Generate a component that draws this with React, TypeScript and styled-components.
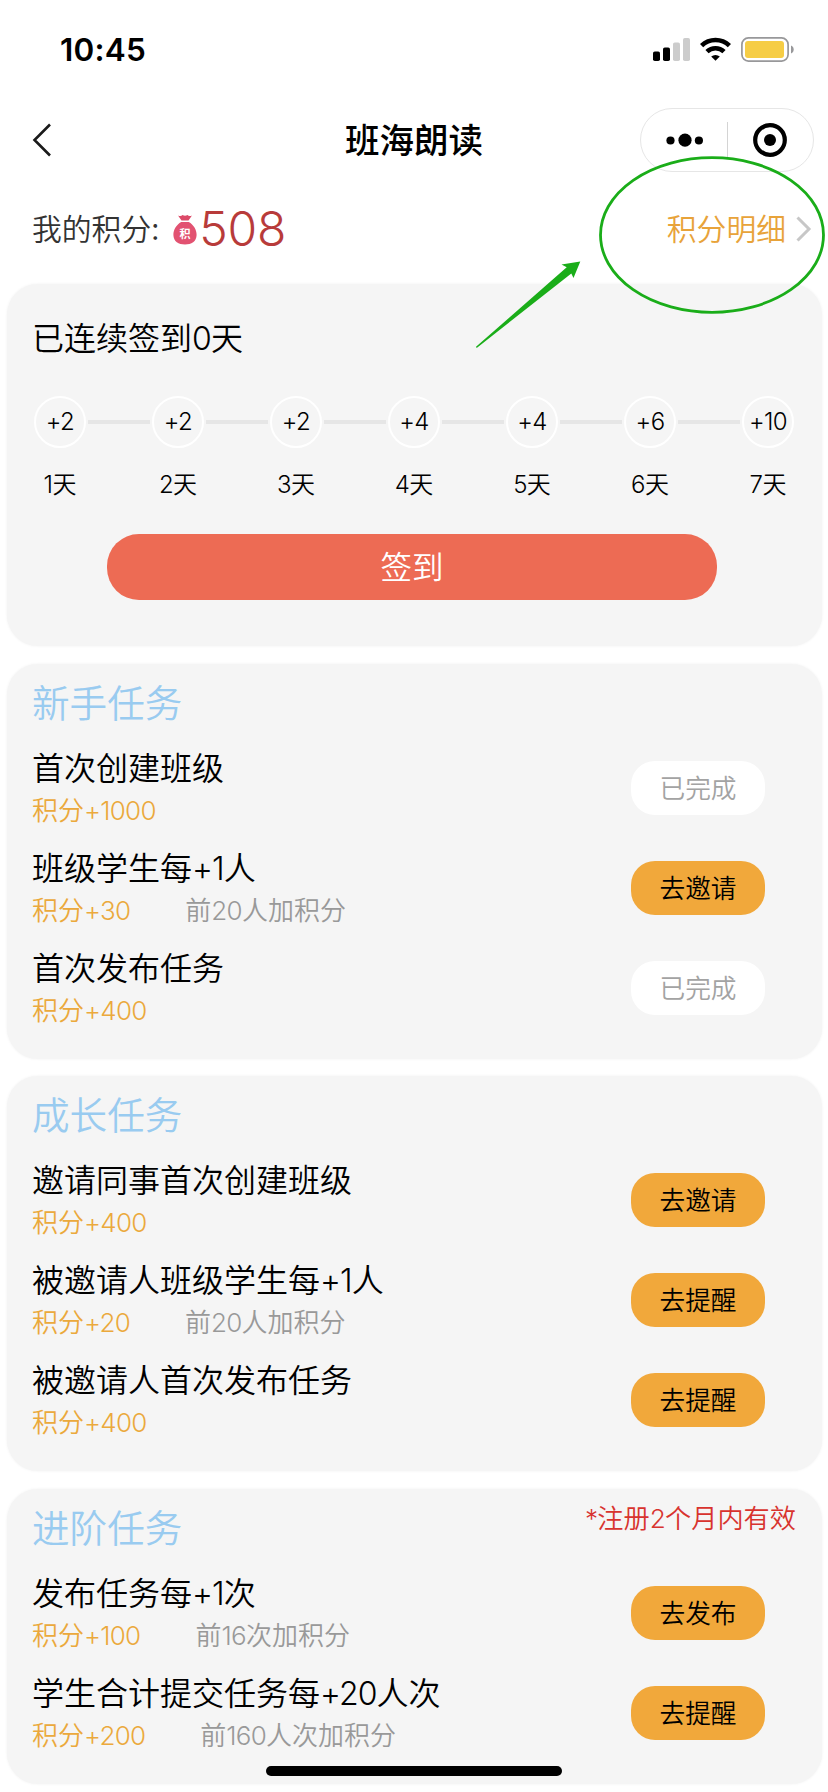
import React from 'react';
import styled, { createGlobalStyle } from 'styled-components';

const GlobalStyle = createGlobalStyle`
  * { box-sizing: border-box; }
  body {
    margin: 0;
    background: #fff;
    color: #000;
    font-family: 'Noto Sans CJK SC', sans-serif;
    font-weight: 350;
  }
  button { font: inherit; border: 0; padding: 0; margin: 0; }
`;

const Page = styled.main`
  position: relative;
  width: 828px;
  height: 1792px;
  overflow: hidden;
  background: #fff;
`;

const StatusBar = styled.header`
  display: flex;
  align-items: center;
  justify-content: space-between;
  height: 99px;
  padding: 0 34px 0 60px;
`;

const Clock = styled.time`
  font: 600 31.5px/40px Inter, sans-serif;
  letter-spacing: 0.2px;
`;

const StatusIcons = styled.div`
  display: flex;
  align-items: center;
  gap: 10px;
`;

const NavBar = styled.nav`
  display: grid;
  grid-template-columns: 174px 1fr 174px;
  align-items: center;
  height: 82px;
  padding: 0 14px;
`;

const BackButton = styled.button`
  display: flex;
  width: 60px;
  padding-left: 18px;
  background: none;
`;

const NavTitle = styled.h1`
  margin: 0;
  padding-bottom: 4px;
  font-size: 34.5px;
  font-weight: 500;
  line-height: 48px;
  text-align: center;
`;

const Capsule = styled.div`
  display: flex;
  align-items: center;
  height: 64px;
  border: 1px solid #e6e6e6;
  border-radius: 32px;
`;

const CapsuleHalf = styled.div`
  display: flex;
  flex: 1;
  justify-content: center;
`;

const CapsuleDivider = styled.div`
  width: 1px;
  height: 37px;
  background: #d4d4d4;
`;

const PointsRow = styled.section`
  display: flex;
  align-items: center;
  justify-content: space-between;
  height: 103px;
  padding: 0 16px 7px 32px;
  font-size: 29.8px;
`;

const Caption = styled.span`
  padding-bottom: 4px;
  line-height: 44px;
`;

const Balance = styled.div`
  display: flex;
  align-items: center;
  color: #333;
`;

const BagIcon = styled.svg`
  margin-left: 14px;
`;

const Score = styled.span`
  margin-left: 2px;
  color: #b83b3a;
  font: 350 48px/56px Inter, sans-serif;
  letter-spacing: -0.2px;
`;

const DetailLink = styled.a`
  display: flex;
  align-items: center;
  gap: 10px;
  color: #e8a33a;
`;

const Cards = styled.div`
  display: flex;
  flex-direction: column;
  gap: 17.6px;
  padding: 0 6px 0 7px;
`;

const Card = styled.section`
  padding: 0 0 21px 25px;
  border-radius: 31px;
  background: #f5f5f5;
  box-shadow: 0 0 3px rgba(0, 0, 0, 0.06);
`;

const CheckInCard = styled(Card)`
  height: 362px;
  padding: 29px 27px 0 25px;
`;

const CheckInTitle = styled.h2`
  margin: 0;
  font-size: 32px;
  font-weight: inherit;
  line-height: 46px;
`;

const Days = styled.ol`
  display: flex;
  justify-content: space-between;
  width: 760px;
  margin: 37px 0 0 2px;
  padding: 0;
  list-style: none;
  font-size: 24px;
`;

const Day = styled.li`
  position: relative;
  display: flex;
  flex-direction: column;
  align-items: center;
  width: 52px;
  white-space: nowrap;

  &:not(:last-child)::after {
    content: '';
    position: absolute;
    top: 24px;
    left: 54px;
    width: 62px;
    height: 4px;
    background: #e6e6e6;
  }
`;

const Reward = styled.span`
  display: flex;
  align-items: center;
  justify-content: center;
  width: 52px;
  height: 52px;
  border: 2px solid #fff;
  border-radius: 50%;
`;

const DayName = styled.span`
  margin-top: 15px;
  line-height: 40px;
`;

const CheckInButton = styled.button`
  display: block;
  width: 610px;
  height: 66px;
  margin: 31px 0 0 75px;
  padding-bottom: 3px;
  border-radius: 32px;
  background: #ed6b54;
  color: #fff;
  font-size: 31.5px;
  line-height: 63px;
`;

const CardHead = styled.div`
  display: flex;
  justify-content: space-between;
  height: 74px;
  padding-right: 26px;
`;

const CardTitle = styled.h2`
  margin: 0;
  color: #99cbf0;
  font-size: 37.6px;
  font-weight: inherit;
  line-height: 74px;
`;

const Notice = styled.span`
  color: #d8332e;
  font-size: 26.2px;
  line-height: 56px;
`;

const Task = styled.article`
  display: flex;
  align-items: center;
  justify-content: space-between;
  height: 100px;
  padding-right: 57px;
`;

const TaskText = styled.div`
  padding-bottom: 3px;
`;

const TaskTitle = styled.h3`
  margin: 0;
  font-size: 32px;
  font-weight: inherit;
  line-height: 44px;
`;

const TaskMeta = styled.p`
  display: flex;
  gap: 55px;
  margin: 0;
  color: #eba93c;
  font-size: 26px;
  line-height: 41px;
`;

const Limit = styled.span`
  color: #999;
`;

const Pill = styled.button<{ $done?: boolean }>`
  width: 134px;
  height: 54px;
  padding-bottom: 3px;
  border-radius: 24px;
  background: ${(p) => (p.$done ? '#fff' : '#f1a83b')};
  color: ${(p) => (p.$done ? '#a3a3a3' : '#000')};
  font-size: 25.7px;
  line-height: 51px;
`;

const Latin = styled.span`
  font-family: Inter, sans-serif;
  font-weight: 340;
  line-height: 1;
  letter-spacing: -0.028em;
`;

const Annotation = styled.svg`
  position: absolute;
  top: 150px;
  left: 470px;
  pointer-events: none;
`;

const HomeIndicator = styled.div`
  position: absolute;
  bottom: 16px;
  left: 266px;
  width: 296px;
  height: 10px;
  border-radius: 5px;
  background: #000;
`;

/* Sets digits and signs in the Latin face, leaving Chinese runs as they are. */
function Mixed({ text }: { text: string }) {
  return (
    <span>
      {text.split(/([+*\d]+)/).map((part, i) => (i % 2 ? <Latin key={i}>{part}</Latin> : part))}
    </span>
  );
}

type TaskItem = { title: string; points: number; limit?: string; action: string };

const groups: { title: string; notice?: string; tasks: TaskItem[] }[] = [
  {
    title: '新手任务',
    tasks: [
      { title: '首次创建班级', points: 1000, action: '已完成' },
      { title: '班级学生每+1人', points: 30, limit: '前20人加积分', action: '去邀请' },
      { title: '首次发布任务', points: 400, action: '已完成' },
    ],
  },
  {
    title: '成长任务',
    tasks: [
      { title: '邀请同事首次创建班级', points: 400, action: '去邀请' },
      { title: '被邀请人班级学生每+1人', points: 20, limit: '前20人加积分', action: '去提醒' },
      { title: '被邀请人首次发布任务', points: 400, action: '去提醒' },
    ],
  },
  {
    title: '进阶任务',
    notice: '*注册2个月内有效',
    tasks: [
      { title: '发布任务每+1次', points: 100, limit: '前16次加积分', action: '去发布' },
      { title: '学生合计提交任务每+20人次', points: 200, limit: '前160人次加积分', action: '去提醒' },
    ],
  },
];

const rewards = [2, 2, 2, 4, 4, 6, 10];

export default function App() {
  return (
    <Page>
      <GlobalStyle />
      <StatusBar>
        <Clock>10:45</Clock>
        <StatusIcons>
          <svg width="37" height="25" viewBox="0 0 37 25">
            <rect x="0" y="14.5" width="7" height="9.5" rx="1.8" />
            <rect x="10" y="10.5" width="7" height="13.5" rx="1.8" />
            <rect x="20" y="5.5" width="7" height="18.5" rx="1.8" fill="#ccc" />
            <rect x="30" y="1" width="7" height="23" rx="1.8" fill="#ccc" />
          </svg>
          <svg width="31" height="25" viewBox="0 0 31 25" fill="none" stroke="#000">
            <path d="M1.6 8.6 A20 20 0 0 1 29.4 8.6" strokeWidth="4.6" />
            <path d="M7 14.6 A12.3 12.3 0 0 1 24 14.6" strokeWidth="4.6" />
            <path d="M11.2 19.6 A6.3 6.3 0 0 1 19.8 19.6 L15.5 23.8 Z" fill="#000" stroke="none" />
          </svg>
          <svg width="53" height="25" viewBox="0 0 53 25">
            <rect x="0.9" y="0.9" width="46.2" height="23.2" rx="6.5" fill="none" stroke="#98989a" strokeWidth="1.7" />
            <rect x="4" y="4" width="39" height="17" rx="3" fill="#f6cd45" />
            <path d="M50 8.5 C53.6 9.8 53.6 15.2 50 16.5 Z" fill="#98989a" />
          </svg>
        </StatusIcons>
      </StatusBar>

      <NavBar>
        <BackButton aria-label="返回">
          <svg width="20" height="34" viewBox="0 0 20 34" fill="none" stroke="#1a1a1a" strokeWidth="2.6">
            <path d="M18 1.5 L2.5 17 L18 32.5" />
          </svg>
        </BackButton>
        <NavTitle>班海朗读</NavTitle>
        <Capsule>
          <CapsuleHalf>
            <svg width="38" height="14" viewBox="0 0 38 14">
              <circle cx="5.5" cy="7.5" r="4.1" />
              <circle cx="20" cy="7.2" r="6.6" />
              <circle cx="33.9" cy="7.5" r="4.1" />
            </svg>
          </CapsuleHalf>
          <CapsuleDivider />
          <CapsuleHalf>
            <svg width="34" height="34" viewBox="0 0 34 34">
              <circle cx="17" cy="17" r="14.8" fill="none" stroke="#000" strokeWidth="4.2" />
              <circle cx="17" cy="17" r="6" />
            </svg>
          </CapsuleHalf>
        </Capsule>
      </NavBar>

      <PointsRow>
        <Balance>
          <Caption>我的积分:</Caption>
          <BagIcon width="24" height="31" viewBox="0 0 24 31">
            <path d="M5 1.5 Q8 2.8 9.5 1 Q12 2.5 14.5 1 Q16 2.8 19 1.5 L15.5 6.5 H8.5 Z" fill="#dc4a68" />
            <path d="M8.2 8 H15.8 C20.5 10.5 23.8 16 23.6 21 C23.4 27.8 18.5 30.5 12 30.5 C5.5 30.5 .6 27.8 .4 21 C.2 16 3.5 10.5 8.2 8 Z" fill="#e25271" />
            <text x="12" y="23.5" fontSize="11" fontWeight="700" fill="#fff" textAnchor="middle">积</text>
          </BagIcon>
          <Score>508</Score>
        </Balance>
        <DetailLink>
          <Caption>积分明细</Caption>
          <svg width="16" height="26" viewBox="0 0 16 26" fill="none" stroke="#c7c7c7" strokeWidth="3">
            <path d="M1.5 1.5 L13 13 L1.5 24.5" />
          </svg>
        </DetailLink>
      </PointsRow>

      <Cards>
        <CheckInCard>
          <CheckInTitle><Mixed text="已连续签到0天" /></CheckInTitle>
          <Days>
            {rewards.map((reward, i) => (
              <Day key={i}>
                <Reward><Latin>+{reward}</Latin></Reward>
                <DayName><Mixed text={`${i + 1}天`} /></DayName>
              </Day>
            ))}
          </Days>
          <CheckInButton>签到</CheckInButton>
        </CheckInCard>

        {groups.map((group) => (
          <Card key={group.title}>
            <CardHead>
              <CardTitle>{group.title}</CardTitle>
              {group.notice && <Notice><Mixed text={group.notice} /></Notice>}
            </CardHead>
            {group.tasks.map((task) => (
              <Task key={task.title}>
                <TaskText>
                  <TaskTitle><Mixed text={task.title} /></TaskTitle>
                  <TaskMeta>
                    <Mixed text={`积分+${task.points}`} />
                    {task.limit && <Limit><Mixed text={task.limit} /></Limit>}
                  </TaskMeta>
                </TaskText>
                <Pill $done={task.action === '已完成'}>{task.action}</Pill>
              </Task>
            ))}
          </Card>
        ))}
      </Cards>

      <Annotation width="358" height="205" viewBox="470 150 358 205">
        <ellipse cx="712" cy="235" rx="111.5" ry="77.3" fill="none" stroke="#1aad19" strokeWidth="2.8" />
        <path d="M580.3 261.5 L561.5 264.6 L566.7 267.2 L476 346.8 L476.7 347.9 L571.3 273.5 L573.5 278 Z" fill="#1aad19" />
      </Annotation>
      <HomeIndicator />
    </Page>
  );
}
